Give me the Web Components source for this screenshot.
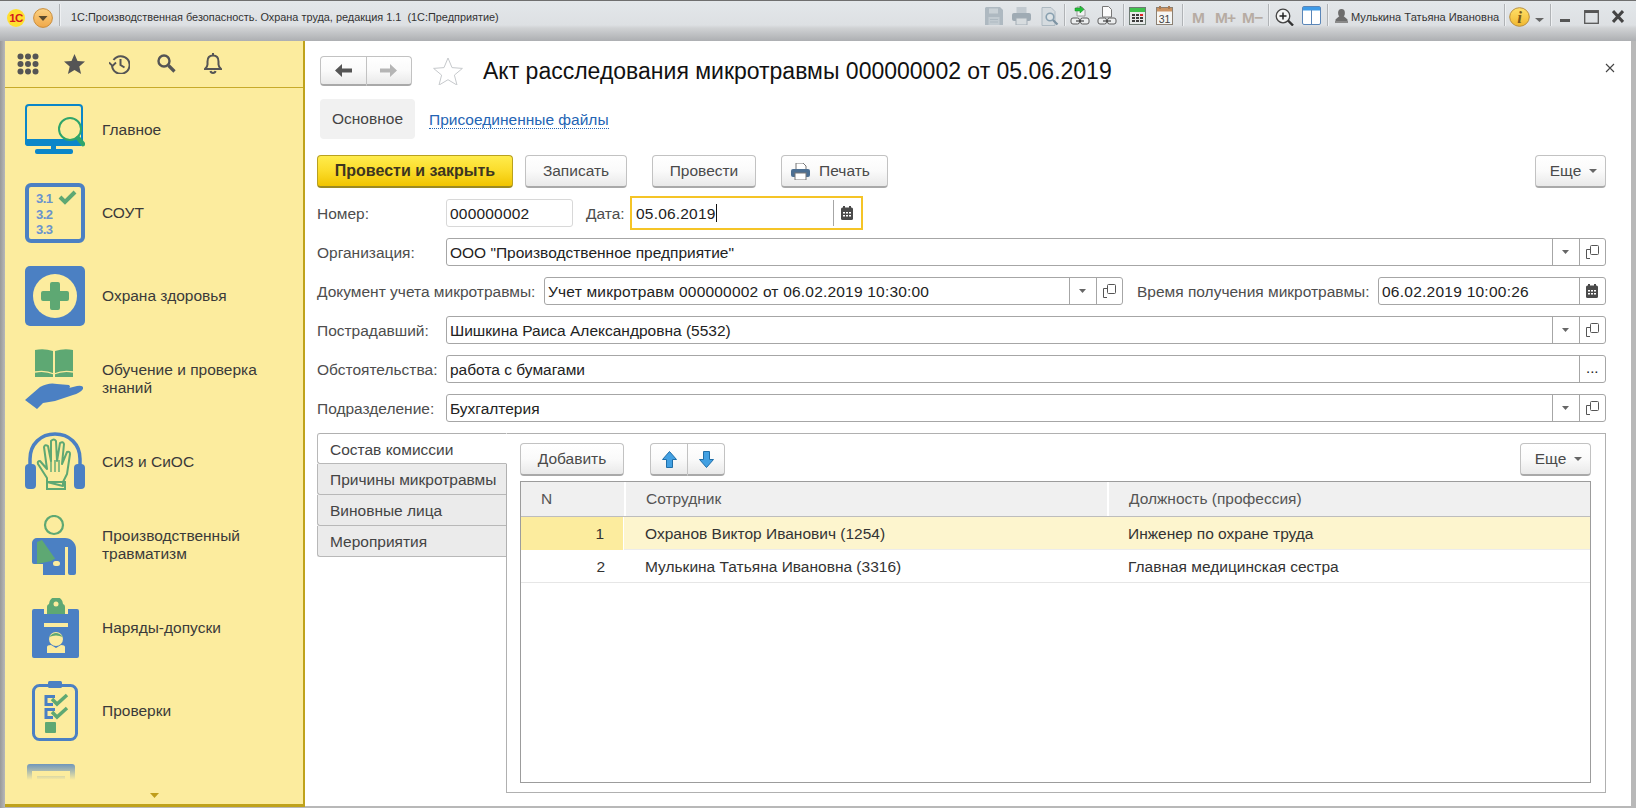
<!DOCTYPE html>
<html>
<head>
<meta charset="utf-8">
<style>
  html, body { margin: 0; padding: 0; background: #fff; }
  body { font: 15.5px "Liberation Sans", Arial, sans-serif; color: #333; }
</style>
</head>
<body>
<app-window>
  <title-bar></title-bar>
  <div style="display:flex;flex:1;min-height:0">
    <side-panel>
      <nav-item icon="main">Главное</nav-item>
      <nav-item icon="sout">СОУТ</nav-item>
      <nav-item icon="health">Охрана здоровья</nav-item>
      <nav-item icon="study">Обучение и проверка знаний</nav-item>
      <nav-item icon="ppe">СИЗ и СиОС</nav-item>
      <nav-item icon="injury">Производственный травматизм</nav-item>
      <nav-item icon="permit">Наряды-допуски</nav-item>
      <nav-item icon="check">Проверки</nav-item>
      <nav-item icon="more"></nav-item>
    </side-panel>
    <doc-form></doc-form>
  </div>
</app-window>

<script>
const BLUE = '#4b80c3'
const GREEN = '#5ea873'
const BG = '#fcec9e'

class AppWindow extends HTMLElement {
  constructor() {
    super()
    const shadow = this.attachShadow({ mode: 'open' })
    shadow.innerHTML = `
    <style>
      :host { display: flex; flex-direction: column; width: 1636px; height: 808px; box-sizing: border-box;
        overflow: hidden; background: linear-gradient(90deg, #999 0, #b8b8b8 5px); }
    </style>
    <slot></slot>`
  }
}
customElements.define('app-window', AppWindow)

// верхняя серая полоса окна
class TitleBar extends HTMLElement {
  constructor() {
    super()
    const shadow = this.attachShadow({ mode: 'open' })
    const sep = ml => `<i class="sep" style="margin-left:${ml}px"></i>`
    const chain = `<rect x="1" y="12" width="8.500" height="6" rx="2" fill="#eceeef" stroke="#5c5c5c"/><rect x="10.500" y="12" width="8.500" height="6" rx="2" fill="#eceeef" stroke="#5c5c5c"/><path d="M6 15h8" stroke="#444" stroke-width="1.200"/>`
    shadow.innerHTML = `
    <style>
      :host { display: flex; flex: none; height: 41px; box-sizing: border-box; padding: 6px 12px 0 0; align-items: flex-start;
        border-top: 1px solid #6f6f6f; font: 10.9px "Liberation Sans", Arial, sans-serif; color: #333;
        background: linear-gradient(180deg, #e3e7ea 0, #dde0e3 24px, #d0d2d4 27px, #adafb2 40px); }
      svg { display: block; flex: none; }
      .sep { display: block; flex: none; width: 1px; height: 22px; margin-top: -3px; background: #b0b3b6; box-shadow: 1px 0 0 #eef0f2; }
      .title { flex: 1; min-width: 0; margin: 2px 0 0 11px; line-height: 16px; white-space: pre; }
      .name { flex: none; width: 147px; margin: 2px 0 0 3px; line-height: 16px; white-space: pre; font-size: 11.1px; }
      .m { flex: none; font: bold 15.5px "Liberation Sans", Arial, sans-serif; color: #b7aca3; line-height: 18px; margin-top: 2px; white-space: pre; }
    </style>
    <svg style="margin-left:7px;margin-top:2px" width="18" height="18" viewBox="0 0 18 18">
      <circle cx="9" cy="9" r="9" fill="#ffdf30"/>
      <text x="9" y="13" text-anchor="middle" font-family="Liberation Sans" font-weight="bold" font-size="11.500" letter-spacing="-0.5" fill="#d5191c">1С</text>
    </svg>
    <svg style="margin-left:8px;margin-top:1px" width="20" height="20" viewBox="0 0 20 20">
      <defs><linearGradient id="o" x1="0" y1="0" x2="0" y2="1"><stop offset="0" stop-color="#fbd283"/><stop offset="1" stop-color="#f0a84a"/></linearGradient></defs>
      <circle cx="10" cy="10" r="9.400" fill="url(#o)" stroke="#c98d3c"/>
      <path d="M5.500 8h9L10 13z" fill="#5b4a2c"/>
    </svg>
    ${sep(6)}
    <span class="title">1С:Производственная безопасность. Охрана труда, редакция 1.1  (1С:Предприятие)</span>

    <svg width="18" height="18" viewBox="0 0 18 18">
      <path d="M1 0h14l3 3v15H0V1z" fill="#aeb9c1"/><rect x="4" y="1.500" width="9" height="5" fill="#c9d1d6"/><rect x="3.500" y="10" width="11" height="8" fill="#c2cbd1"/><path d="M5 12.500h8M5 15h8" stroke="#aeb9c1"/>
    </svg>
    <svg style="margin-left:9px" width="19" height="18" viewBox="0 0 19 18">
      <rect x="4.500" y="0" width="10" height="7" fill="#c2cad0"/><rect x="0" y="6" width="19" height="8" rx="2" fill="#9fabb4"/><rect x="4" y="11" width="11" height="7" fill="#d7dcdf" stroke="#a3aeb6"/>
    </svg>
    <svg style="margin-left:10px" width="18" height="19" viewBox="0 0 18 19">
      <path d="M1 .5h9l4 4v14H1z" fill="#d5dbdf" stroke="#adb9c1"/><circle cx="9" cy="10" r="3.800" fill="#dde3e6" stroke="#88a0b0" stroke-width="1.600"/><path d="M12 13l4.500 4.500" stroke="#7d93a3" stroke-width="2.200"/>
    </svg>
    ${sep(5)}
    <svg style="margin-left:5px;margin-top:-1px" width="20" height="19" viewBox="0 0 20 19">
      <path d="M7 1h5l3 3v6H7z" fill="#f1f2f3" stroke="#888" stroke-width=".8"/><path d="M10 0l4 3.500-4 3.500V5H5V2h5z" fill="#22c03a" stroke="#15861f" stroke-width=".5"/>${chain}
    </svg>
    <svg style="margin-left:7px;margin-top:-1px" width="20" height="19" viewBox="0 0 20 19">
      <path d="M5.500.5h6l3 3V11h-9z" fill="#fbfbfb" stroke="#777"/>${chain}
    </svg>
    ${sep(6)}
    <svg style="margin-left:5px" width="17" height="18" viewBox="0 0 17 18">
      <rect x=".5" y=".5" width="16" height="17" fill="#e8eaea" stroke="#6d7a72"/><rect x="1" y="1" width="15" height="4" fill="#3fc24d"/>
      <path d="M3 7h3v2H3zm4 0h3v2H7zm-4 3h3v2H3zm4 0h3v2H7zm4 0h3v2h-3zm-8 3h3v2H3zm4 0h3v2H7zm4 0h3v2h-3z" fill="#3d3d3d"/><rect x="11" y="7" width="3" height="2" fill="#d22"/>
    </svg>
    <svg style="margin-left:10px;margin-top:-1px" width="17" height="19" viewBox="0 0 17 19">
      <rect x=".5" y="1.500" width="16" height="17" fill="#f6f6f4" stroke="#8b8073"/><rect x="1" y="2" width="15" height="3.500" fill="#cb9362"/><path d="M4 0v3M13 0v3" stroke="#a87a52" stroke-width="2"/>
      <text x="8.500" y="16.500" text-anchor="middle" font-family="Liberation Sans" font-size="10.500" fill="#444">31</text>
    </svg>
    ${sep(9)}
    <span class="m" style="margin-left:9px;width:12px">M</span>
    <span class="m" style="margin-left:11px;width:20px;letter-spacing:-1px">M+</span>
    <span class="m" style="margin-left:7px;width:21px;letter-spacing:-1px">M−</span>
    ${sep(5)}
    <svg style="margin-left:6px;margin-top:1px" width="19" height="18" viewBox="0 0 19 18">
      <circle cx="8" cy="8" r="6.800" fill="#f4f5f5" stroke="#444" stroke-width="1.300"/><path d="M8 4.500v7M4.500 8h7" stroke="#222" stroke-width="1.500"/><path d="M13 12.500l5 5" stroke="#333" stroke-width="2.400"/>
    </svg>
    <svg style="margin-left:8px;margin-top:-1px" width="19" height="19" viewBox="0 0 19 19">
      <rect x=".5" y=".5" width="18" height="18" rx="1.500" fill="#fff" stroke="#5a86b8"/><rect x="1" y="1" width="17" height="3.500" fill="#3e9be8"/><path d="M9.500 4v14" stroke="#5a86b8"/>
    </svg>
    ${sep(6)}
    <svg style="margin-left:7px;margin-top:2px" width="13" height="14" viewBox="0 0 13 14">
      <ellipse cx="6.500" cy="4" rx="3.400" ry="4" fill="#6d6d6d"/><path d="M4.500 7 .5 10.500V12h12v-1.500L8.500 7z" fill="#6d6d6d"/><rect x="0" y="12" width="13" height="2" fill="#8a8a8a"/>
    </svg>
    <span class="name">Мулькина Татьяна Ивановна</span>
    ${sep(6)}
    <svg style="margin-left:4px" width="21" height="20" viewBox="0 0 21 20">
      <defs><linearGradient id="g" x1="0" y1="0" x2="0" y2="1"><stop offset="0" stop-color="#ffe16a"/><stop offset="1" stop-color="#f0b72f"/></linearGradient></defs>
      <ellipse cx="10.500" cy="10" rx="9.800" ry="9.300" fill="url(#g)" stroke="#b98f3e"/>
      <text x="10.500" y="16" text-anchor="middle" font-family="Liberation Serif" font-style="italic" font-weight="bold" font-size="17" fill="#7a5a1a">i</text>
    </svg>
    <svg style="margin-left:5px;margin-top:11px" width="9" height="4" viewBox="0 0 9 4"><path d="M0 0h9L4.500 4z" fill="#666"/></svg>
    ${sep(6)}
    <svg style="margin-left:9px;margin-top:12px" width="10" height="3" viewBox="0 0 10 3"><rect width="10" height="3" fill="#555"/></svg>
    <svg style="margin-left:14px;margin-top:3px" width="15" height="14" viewBox="0 0 15 14"><rect x=".7" y=".7" width="13.600" height="12.600" fill="none" stroke="#555" stroke-width="1.300"/><rect x="1" y="1" width="13" height="2" fill="#555"/></svg>
    <svg style="margin-left:13px;margin-top:3px" width="12" height="13" viewBox="0 0 12 13"><path d="M1 1l10 11M11 1 1 12" stroke="#444" stroke-width="3"/></svg>
    `
  }
}
customElements.define('title-bar', TitleBar)

const icons = {
  main: `<svg width="60" height="60" viewBox="0 0 60 60"><g transform="translate(0 4)">
    <rect x="1" y="1" width="56" height="40" rx="3" fill="none" stroke="#0a86c9" stroke-width="2"/>
    <path d="M0 35h58v4a3 3 0 0 1-3 3H3a3 3 0 0 1-3-3z" fill="#0a86c9"/>
    <rect x="26" y="42" width="5" height="5" fill="#0a86c9"/><rect x="10" y="45" width="38" height="5" rx="2" fill="#0a86c9"/>
    <circle cx="45" cy="25" r="11" fill="${BG}" stroke="#2fa56b" stroke-width="2"/>
    <path d="M53 34l5 6" stroke="#2fa56b" stroke-width="4.500" stroke-linecap="round"/>
  </g></svg>`,
  sout: `<svg width="60" height="60" viewBox="0 0 60 60">
    <rect x="2" y="2" width="56" height="56" rx="4" fill="${BG}" stroke="${BLUE}" stroke-width="4"/>
    <g font-family="Liberation Sans" font-weight="bold" font-size="13" fill="#6a93cd" letter-spacing="-.6">
      <text x="11" y="20">3.1</text><text x="11" y="36">3.2</text><text x="11" y="51">3.3</text>
    </g>
    <path d="M35 14l5 5 10-10" fill="none" stroke="${GREEN}" stroke-width="4"/>
  </svg>`,
  health: `<svg width="60" height="60" viewBox="0 0 60 60">
    <rect width="60" height="60" rx="5" fill="${BLUE}"/>
    <circle cx="30" cy="30" r="22" fill="${BG}"/>
    <path d="M25 18a2 2 0 0 1 2-2h6a2 2 0 0 1 2 2v7h7a2 2 0 0 1 2 2v6a2 2 0 0 1-2 2h-7v7a2 2 0 0 1-2 2h-6a2 2 0 0 1-2-2v-7h-7a2 2 0 0 1-2-2v-6a2 2 0 0 1 2-2h7z" fill="${GREEN}"/>
  </svg>`,
  study: `<svg width="60" height="60" viewBox="0 0 60 60">
    <path d="M10 1q9-2 18 1v26H10zM30 2q9-3 18-1v27H30z" fill="${GREEN}"/>
    <path d="M10 23q10-2 19 2 9-4 19-2" fill="none" stroke="${BG}" stroke-width="1.300"/>
    <path d="M0 51 15 38q9-5 17-3l12 1q2 2 0 3l-12 2 12-2 8-2q7-1 6 3-3 4-10 6L30 52l-12 2-6 6z" fill="${BLUE}"/>
  </svg>`,
  ppe: `<svg width="60" height="60" viewBox="0 0 60 60">
    <path d="M5 34V27C5 12 16 2 30 2s25 10 25 25v7" fill="none" stroke="${BLUE}" stroke-width="3.500"/>
    <rect x="0" y="32" width="11" height="25" rx="4" fill="${BLUE}"/><rect x="49" y="32" width="11" height="25" rx="4" fill="${BLUE}"/>
    <path d="M22 50V46L13 32q-1-3 2-3l7 8-3-22q1-3 4-1l3 15V9q3-3 5 0l1 20 3-18q3-2 4 1l-2 20 5-12q3-1 3 2l-3 20-4 8v4z" fill="none" stroke="${GREEN}" stroke-width="2" stroke-linejoin="round"/>
    <path d="M26 28v12M30 28v12M34 28v12" stroke="${GREEN}" stroke-width="1.400"/>
    <rect x="22" y="50" width="18" height="7" fill="none" stroke="${GREEN}" stroke-width="2"/>
  </svg>`,
  injury: `<svg width="60" height="60" viewBox="0 0 60 60">
    <circle cx="29" cy="10" r="9" fill="none" stroke="${GREEN}" stroke-width="2.200"/>
    <path d="M7 28a5 5 0 0 1 5-5h28a11 11 0 0 1 11 11v24a2 2 0 0 1-2 2h-4a2 2 0 0 1-2-2V32h-3v28H18V49H9a2 2 0 0 1-2-2z" fill="${BLUE}"/>
    <path d="M12 27l5-2 14 20-19 4z" fill="${GREEN}"/>
    <rect x="27" y="45" width="9" height="7" rx="3.500" fill="${BG}" stroke="${BLUE}" stroke-width="2"/>
  </svg>`,
  permit: `<svg width="60" height="60" viewBox="0 0 60 60">
    <path d="M7 13a2 2 0 0 1 2-2h10v5h24v-5h9a2 2 0 0 1 2 2v45a2 2 0 0 1-2 2H9a2 2 0 0 1-2-2z" fill="${BLUE}"/>
    <path d="M24 6a7 7 0 0 1 14 0 3 3 0 0 1 2 3v7H22V9a3 3 0 0 1 2-3z" fill="${GREEN}"/>
    <circle cx="31" cy="6" r="2.500" fill="${BG}"/>
    <rect x="19" y="25" width="24" height="4" fill="${BG}"/>
    <circle cx="31" cy="41" r="7" fill="${BG}"/><path d="M24 39q7-8 14 0-7-3-14 0z" fill="${GREEN}"/>
    <path d="M22 55v-6q0-2 4-2l5 3 5-3q4 0 4 2v6z" fill="${BG}"/>
  </svg>`,
  check: `<svg width="60" height="60" viewBox="0 0 60 60">
    <rect x="8.500" y="4.500" width="43" height="54" rx="6" fill="none" stroke="${BLUE}" stroke-width="3"/>
    <rect x="23" y="0" width="14" height="7" rx="1.500" fill="${BLUE}"/>
    <path d="M30 15.500H21v8h7M30 28.500H21v8h7" fill="none" stroke="${BLUE}" stroke-width="3"/>
    <path d="M27 18l5 5 10-9M27 31l5 5 10-9" fill="none" stroke="${GREEN}" stroke-width="3.500"/>
    <rect x="20" y="41" width="11" height="11" rx="1" fill="${GREEN}"/>
  </svg>`,
  more: `<svg width="60" height="60" viewBox="0 0 60 60">
    <path d="M1 3a3 3 0 0 1 3-3h42a3 3 0 0 1 3 3v20H1z" fill="${BLUE}" transform="translate(1 0)"/>
    <rect x="7" y="7" width="38" height="20" fill="${BG}"/><rect x="12" y="12" width="28" height="3" fill="${BLUE}"/>
  </svg>`
}

class NavItem extends HTMLElement {
  constructor() {
    super()
    const shadow = this.attachShadow({ mode: 'open' })
    shadow.innerHTML = `
    <style>
      :host { display: flex; flex: none; height: 83px; align-items: center; padding-left: 20px; }
      .ic { width: 60px; height: 60px; flex: none; margin-right: 17px; }
      svg { display: block; }
      .t { line-height: 18px; width: 190px; color: #3a3a3a; }
    </style>
    <div class="ic">${icons[this.getAttribute('icon')]}</div>
    <div class="t"><slot></slot></div>`
  }
}
customElements.define('nav-item', NavItem)

class SidePanel extends HTMLElement {
  constructor() {
    super()
    const shadow = this.attachShadow({ mode: 'open' })
    shadow.innerHTML = `
    <style>
      :host { display: flex; flex-direction: column; flex: none; width: 300px; height: 766px; box-sizing: border-box;
        margin-left: 5px; background: ${BG}; border-right: 2px solid #bfa21b; border-bottom: 3px solid #bfa21b; }
      .head { display: flex; flex: none; height: 47px; box-sizing: border-box; border-bottom: 1px solid #c7aa2a; align-items: flex-start; }
      .head svg { display: block; flex: none; }
      .list { flex: 1; min-height: 0; overflow: hidden; position: relative; }
      .list::after { content: ""; position: absolute; left: 0; right: 0; bottom: 0; height: 17px;
        background: linear-gradient(180deg, rgba(252,236,158,.15), ${BG}); }
      .foot { flex: none; height: 24px; display: flex; justify-content: center; padding-top: 13px; box-sizing: border-box; }
    </style>
    <div class="head">
      <svg style="margin:12px 0 0 12px" width="22" height="22" viewBox="0 0 22 22" fill="#555">
        <circle cx="3.500" cy="3.500" r="3"/><circle cx="11" cy="3.500" r="3"/><circle cx="18.500" cy="3.500" r="3"/>
        <circle cx="3.500" cy="11" r="3"/><circle cx="11" cy="11" r="3"/><circle cx="18.500" cy="11" r="3"/>
        <circle cx="3.500" cy="18.500" r="3"/><circle cx="11" cy="18.500" r="3"/><circle cx="18.500" cy="18.500" r="3"/>
      </svg>
      <svg style="margin:13px 0 0 25px" width="21" height="20" viewBox="0 0 21 20"><path d="M10.500 0l3 7 7.500.6-5.700 5 1.800 7.400-6.600-4-6.600 4 1.800-7.400L0 7.600 7.500 7z" fill="#555"/></svg>
      <svg style="margin:13px 0 0 24px" width="21" height="20" viewBox="0 0 21 20" fill="none" stroke="#555" stroke-width="2">
        <path d="M4.500 6A8.800 8.800 0 1 1 3 11.500"/><path d="M11.500 5v6l4 2.500"/><path d="M0 8.500l3.500 3.500 3.500-3.500" stroke-width="1.800"/>
      </svg>
      <svg style="margin:13px 0 0 27px" width="19" height="19" viewBox="0 0 19 19" fill="none" stroke="#555">
        <circle cx="7" cy="7" r="5.500" stroke-width="2.400"/><path d="M11.500 11.500l6 6" stroke-width="3.200"/>
      </svg>
      <svg style="margin:12px 0 0 28px" width="18" height="21" viewBox="0 0 18 21" fill="none" stroke="#555" stroke-width="2">
        <path d="M9 2.500c-4 0-5.500 3-5.500 6v3c0 2-1 3-2.500 4.500h16c-1.500-1.500-2.500-2.500-2.500-4.500v-3c0-3-1.500-6-5.500-6z"/><path d="M9 0v3"/><path d="M6.500 18c.5 2.500 4.500 2.500 5 0" />
      </svg>
    </div>
    <div class="list"><slot></slot></div>
    <div class="foot"><svg width="9" height="5" viewBox="0 0 9 5" style="display:block"><path d="M0 0h9L4.500 5z" fill="#bf9d1b"/></svg></div>`
  }
}
customElements.define('side-panel', SidePanel)

class UiButton extends HTMLElement {
  constructor() {
    super()
    const shadow = this.attachShadow({ mode: 'open' })
    shadow.innerHTML = `
    <style>
      :host { display: flex; flex: none; align-items: center; justify-content: center; box-sizing: border-box; height: 33px;
        border: 1px solid #c2c2c2; border-bottom: 2px solid #a9a9a9; border-radius: 4px; color: #4a4a4a;
        background: linear-gradient(180deg, #fff 0, #fafafa 50%, #e9e9e9 100%); white-space: nowrap; }
      :host([primary]) { border-color: #b9a11f; border-bottom-color: #9c8a22; color: #3d3520; font-weight: bold; font-size: 16px;
        background: linear-gradient(180deg, #ffec4d 0, #fbdc2a 50%, #f1c400 100%); }
    </style>
    <slot></slot>`
  }
}
customElements.define('ui-button', UiButton)

const arrowDown = `<svg width="8" height="4" viewBox="0 0 8 4" style="display:block"><path d="M0 0h8L4 4z" fill="#666"/></svg>`
const dropIcon = `<svg width="7" height="4" viewBox="0 0 7 4" style="display:block"><path d="M0 0h7L3.500 4z" fill="#666"/></svg>`
const openIcon = `<svg width="13" height="14" viewBox="0 0 13 14" style="display:block" fill="none" stroke="#555"><rect x="4.500" y=".5" width="8" height="9" rx="1"/><path d="M4 4.500H.5v9"/><path d="M.5 13.500H4"/></svg>`
const calIcon = `<svg width="12" height="14" viewBox="0 0 12 14" style="display:block"><rect y="1.500" width="12" height="12.500" rx="1.500" fill="#4a4a4a"/><rect x="2" width="2" height="3" fill="#4a4a4a"/><rect x="8" width="2" height="3" fill="#4a4a4a"/><path d="M2 6h2v1.500H2zm3 0h2v1.500H5zm3 0h2v1.500H8zM2 9h2v1.500H2zm3 0h2v1.500H5zm3 0h2v1.500H8z" fill="#fff"/></svg>`

class FormField extends HTMLElement {
  constructor() {
    super()
    const shadow = this.attachShadow({ mode: 'open' })
    const btns = (this.getAttribute('btns') || '').split(' ').filter(Boolean)
    const glyph = { drop: dropIcon, open: openIcon, cal: calIcon, dots: '<span class="dots">...</span>' }
    shadow.innerHTML = `
    <style>
      :host { display: flex; box-sizing: border-box; height: 28px; min-width: 0; border: 1px solid #a6a6a6; border-radius: 3px;
        color: #222; background: #fff; align-items: stretch; }
      :host([light]) { border-color: #d8d8d8; }
      :host([focus]) { height: 34px; margin: -3px 0; border: 2px solid #f5c426; border-radius: 0; padding: 2px 0; }
      .v { flex: 1; min-width: 0; padding-left: 3px; line-height: 27px; white-space: nowrap; overflow: hidden; }
      :host([focus]) .v { padding-left: 4px; line-height: 27px; }
      .b { flex: none; width: 25.500px; display: flex; align-items: center; justify-content: center; border-left: 1px solid #a6a6a6; }
      :host([focus]) .b { width: 27.500px; }
      .dots { font-size: 15px; color: #222; margin-top: -4px; }
      .cur { display: inline-block; width: 1px; height: 18px; background: #111; vertical-align: -3px; }
    </style>
    <div class="v"><slot></slot>${this.hasAttribute('focus') ? '<span class="cur"></span>' : ''}</div>
    ${btns.map(b => `<div class="b">${glyph[b]}</div>`).join('')}`
  }
}
customElements.define('form-field', FormField)

class FormLabel extends HTMLElement {
  constructor() {
    super()
    const shadow = this.attachShadow({ mode: 'open' })
    shadow.innerHTML = `
    <style>
      :host { display: block; flex: none; line-height: 30px; color: #4d4d4d; white-space: nowrap; }
    </style><slot></slot>`
  }
}
customElements.define('form-label', FormLabel)

class DataGrid extends HTMLElement {
  constructor() {
    super()
    const shadow = this.attachShadow({ mode: 'open' })
    shadow.innerHTML = `
    <style>
      :host { display: block; flex: 1; min-height: 0; box-sizing: border-box; border: 1px solid #9c9c9c; }
      .r { display: grid; grid-template-columns: 103px 483px 1fr; box-sizing: border-box; }
      .h { height: 35px; background: #f0f0f0; border-bottom: 1px solid #bdbdbd; color: #555; line-height: 33px; }
      .h div + div { border-left: 2px solid #fff; }
      .h .n { padding-left: 20px; }
      .h .c { padding-left: 20px; }
      .d { height: 33px; line-height: 33px; color: #333; border-bottom: 1px solid #e6e6e6; }
      .d .n { text-align: right; padding-right: 19px; }
      .d .c { padding-left: 21px; }
      .sel { background: #fdf5ce; border-bottom: 1px solid #ececec; }
      .sel .n { background: #fcec9e; border-right: 1px solid #fff; }
    </style>
    <div class="r h"><div class="n">N</div><div class="c">Сотрудник</div><div class="c">Должность (профессия)</div></div>
    <div class="r d sel"><div class="n">1</div><div class="c">Охранов Виктор Иванович (1254)</div><div class="c">Инженер по охране труда</div></div>
    <div class="r d"><div class="n">2</div><div class="c">Мулькина Татьяна Ивановна (3316)</div><div class="c">Главная медицинская сестра</div></div>`
  }
}
customElements.define('data-grid', DataGrid)

class SideTabs extends HTMLElement {
  constructor() {
    super()
    const shadow = this.attachShadow({ mode: 'open' })
    shadow.innerHTML = `
    <style>
      :host { display: flex; flex: 1; min-height: 0; margin-top: 11px; }
      .tabs { flex: none; width: 190px; display: flex; flex-direction: column; border-right: 1px solid #b0b0b0; box-sizing: border-box; }
      .tab { box-sizing: border-box; height: 31px; padding-left: 12px; line-height: 31px; color: #444; background: #ebebeb;
        border: 1px solid #b8b8b8; border-top: 0; border-right: 0; border-radius: 0 0 0 3px; }
      .tab.on { background: #fff; border-top: 1px solid #b0b0b0; border-radius: 3px 0 0 3px; margin-right: -1px; border-right: 1px solid #fff; }
      .body { flex: 1; min-width: 0; box-sizing: border-box; border: 1px solid #b0b0b0; border-left: 0; padding: 9px 14px 9px 13px; display: flex; flex-direction: column; }
      .bar { display: flex; flex: none; height: 33px; margin-bottom: 5px; }
      .grp { display: flex; margin-left: 26px; width: 75px; }
      .esc { margin-left: auto; width: 71px; padding-left: 6px; gap: 8px; }
      .ar { flex: 1; }
      .ar:first-child { border-radius: 4px 0 0 4px; }
      .ar:last-child { border-radius: 0 4px 4px 0; border-left: 0; }
      svg { display: block; }
    </style>
    <div class="tabs">
      <div class="tab on">Состав комиссии</div>
      <div class="tab">Причины микротравмы</div>
      <div class="tab">Виновные лица</div>
      <div class="tab">Мероприятия</div>
    </div>
    <div class="body">
      <div class="bar">
        <ui-button style="width:104px">Добавить</ui-button>
        <div class="grp">
          <ui-button class="ar"><svg width="15" height="17" viewBox="0 0 15 17"><path d="M7.500 .5l7 8h-4v8h-6v-8h-4z" fill="#42a0e2" stroke="#1f6ea8"/></svg></ui-button>
          <ui-button class="ar"><svg width="15" height="17" viewBox="0 0 15 17"><path d="M7.500 16.500l7-8h-4v-8h-6v8h-4z" fill="#42a0e2" stroke="#1f6ea8"/></svg></ui-button>
        </div>
        <ui-button class="esc">Еще ${arrowDown}</ui-button>
      </div>
      <data-grid></data-grid>
    </div>`
  }
}
customElements.define('side-tabs', SideTabs)

class DocForm extends HTMLElement {
  constructor() {
    super()
    const shadow = this.attachShadow({ mode: 'open' })
    shadow.innerHTML = `
    <style>
      :host { display: flex; flex-direction: column; flex: none; width: 1326px; height: 765px; box-sizing: border-box;
        background: #fff; padding: 15px 25px 13px 12px; position: relative; }
      .top { display: flex; flex: none; height: 30px; align-items: center; padding-left: 3px; }
      .navs { display: flex; width: 92px; height: 30px; flex: none; }
      .navs ui-button { flex: 1; height: 30px; }
      .navs ui-button:first-child { border-radius: 4px 0 0 4px; }
      .navs ui-button:last-child { border-radius: 0 4px 4px 0; border-left: 0; }
      h1 { font: normal 23px "Liberation Sans", Arial, sans-serif; color: #111; margin: 0 0 0 20px; white-space: nowrap; }
      .star { margin-left: 21px; flex: none; display: block; }
      .x { position: absolute; right: 16px; top: 22px; display: block; }
      .pages { display: flex; flex: none; margin-top: 13px; height: 40px; padding-left: 3px; align-items: center; }
      .pg { width: 95px; height: 40px; line-height: 40px; text-align: center; background: #f1f1f1; border-radius: 4px; color: #444; }
      .lnk { margin-left: 14px; color: #2464b4; border-bottom: 1px dotted #2464b4; line-height: 17px; margin-top: 2px; }
      .bar { display: flex; flex: none; margin-top: 16px; height: 33px; }
      .row { display: flex; flex: none; height: 28px; margin-top: 11px; }
      .grow { flex: 1; min-width: 0; }
      .esc { margin-left: auto; width: 71px; padding-left: 6px; gap: 8px; }
      svg { display: block; }
    </style>
    <div class="top">
      <div class="navs">
        <ui-button><svg width="17" height="13" viewBox="0 0 17 13"><path d="M7 0v4.500h10v4H7V13L0 6.500z" fill="#555"/></svg></ui-button>
        <ui-button><svg width="17" height="13" viewBox="0 0 17 13"><path d="M10 0v4.500H0v4h10V13l7-6.500z" fill="#b5b5b5"/></svg></ui-button>
      </div>
      <svg class="star" width="30" height="28" viewBox="0 0 30 28"><path d="M15 1l4 9.600 10.400.8-8 6.700 2.600 10-9-5.400-9 5.400 2.600-10-8-6.700L11 10.600z" fill="#fff" stroke="#c6c9cc"/></svg>
      <h1>Акт расследования микротравмы 000000002 от 05.06.2019</h1>
    </div>
    <svg class="x" width="10" height="10" viewBox="0 0 10 10"><path d="M1 1l8 8M9 1l-8 8" stroke="#444" stroke-width="1.100"/></svg>
    <div class="pages"><div class="pg">Основное</div><div class="lnk">Присоединенные файлы</div></div>
    <div class="bar">
      <ui-button primary style="width:196px">Провести и закрыть</ui-button>
      <ui-button style="width:102px;margin-left:12px">Записать</ui-button>
      <ui-button style="width:104px;margin-left:25px">Провести</ui-button>
      <ui-button style="width:107px;margin-left:25px;gap:9px;padding-right:8px"><svg width="19" height="17" viewBox="0 0 19 17"><path d="M5 0h7l3 3v5H5z" fill="#fff" stroke="#777"/><rect y="6" width="19" height="8" rx="2" fill="#4c6f92"/><rect x="4" y="10" width="11" height="7" fill="#fff" stroke="#777"/></svg>Печать</ui-button>
      <ui-button class="esc">Еще ${arrowDown}</ui-button>
    </div>
    <div class="row" style="margin-top:11px">
      <form-label style="width:129px">Номер:</form-label>
      <form-field light style="width:127px;letter-spacing:.2px">000000002</form-field>
      <form-label style="margin-left:13px;width:44px">Дата:</form-label>
      <form-field focus btns="cal" style="width:233px;letter-spacing:.2px">05.06.2019</form-field>
    </div>
    <div class="row">
      <form-label style="width:129px">Организация:</form-label>
      <form-field class="grow" btns="drop open">ООО "Производственное предприятие"</form-field>
    </div>
    <div class="row">
      <form-label style="width:227px">Документ учета микротравмы:</form-label>
      <form-field btns="drop open" style="width:579px;letter-spacing:.2px">Учет микротравм 000000002 от 06.02.2019 10:30:00</form-field>
      <form-label style="margin-left:14px;width:241px">Время получения микротравмы:</form-label>
      <form-field class="grow" btns="cal" style="letter-spacing:.25px">06.02.2019 10:00:26</form-field>
    </div>
    <div class="row">
      <form-label style="width:129px">Пострадавший:</form-label>
      <form-field class="grow" btns="drop open">Шишкина Раиса Александровна (5532)</form-field>
    </div>
    <div class="row">
      <form-label style="width:129px">Обстоятельства:</form-label>
      <form-field class="grow" btns="dots">работа с бумагами</form-field>
    </div>
    <div class="row">
      <form-label style="width:129px">Подразделение:</form-label>
      <form-field class="grow" btns="drop open">Бухгалтерия</form-field>
    </div>
    <side-tabs></side-tabs>`
  }
}
customElements.define('doc-form', DocForm)
</script>
</body>
</html>
